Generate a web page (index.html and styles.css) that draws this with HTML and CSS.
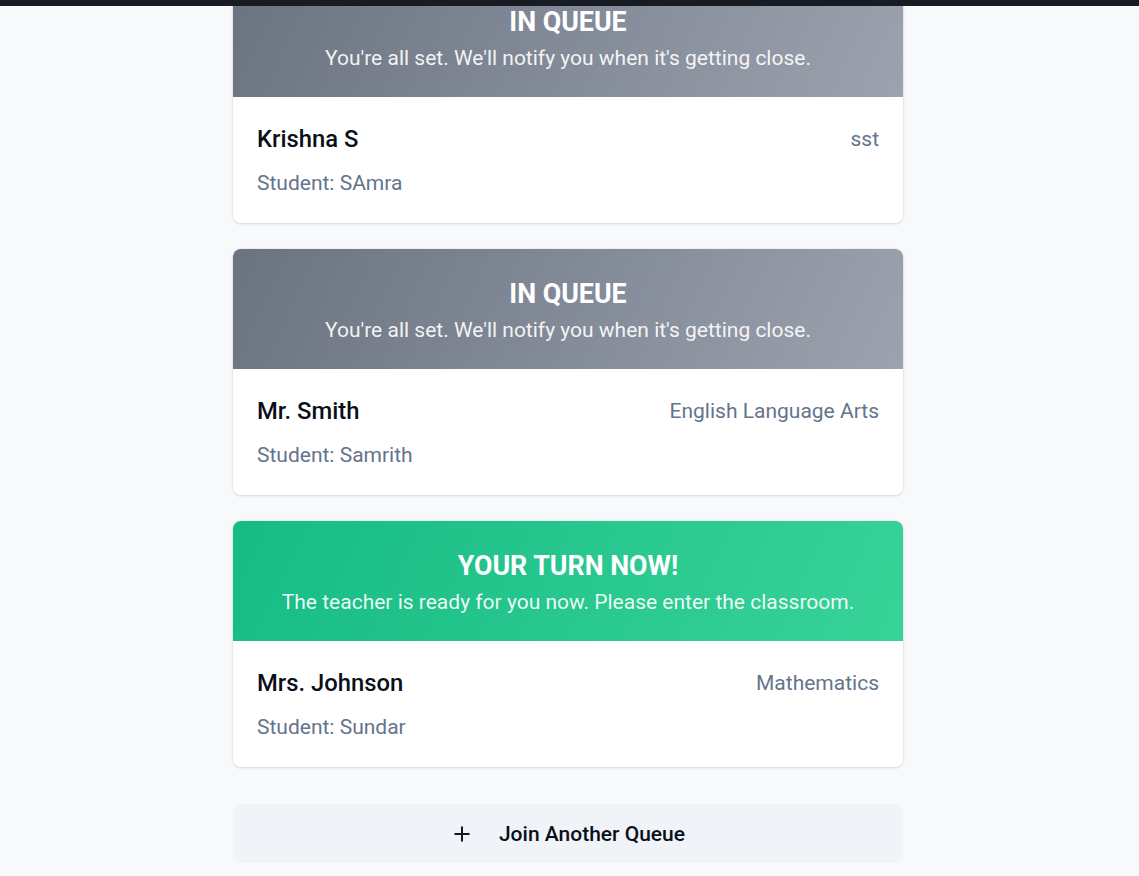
FILE: index.html
```html
<!DOCTYPE html>
<html lang="en">
<head>
<meta charset="utf-8">
<title>My Queues</title>
<link rel="stylesheet" href="styles.css">
</head>
<body>
<div class="topbar"></div>
<main class="page">
  <section class="list">
    <article class="card">
      <header class="status status-queue">
        <h2 class="status-title">IN QUEUE</h2>
        <p class="status-text">You're all set. We'll notify you when it's getting close.</p>
      </header>
      <div class="card-body">
        <div class="row">
          <span class="teacher">Krishna S</span>
          <span class="subject">sst</span>
        </div>
        <div class="student">Student: SAmra</div>
      </div>
    </article>
    <article class="card">
      <header class="status status-queue">
        <h2 class="status-title">IN QUEUE</h2>
        <p class="status-text">You're all set. We'll notify you when it's getting close.</p>
      </header>
      <div class="card-body">
        <div class="row">
          <span class="teacher">Mr. Smith</span>
          <span class="subject">English Language Arts</span>
        </div>
        <div class="student">Student: Samrith</div>
      </div>
    </article>
    <article class="card">
      <header class="status status-turn">
        <h2 class="status-title">YOUR TURN NOW!</h2>
        <p class="status-text">The teacher is ready for you now. Please enter the classroom.</p>
      </header>
      <div class="card-body">
        <div class="row">
          <span class="teacher">Mrs. Johnson</span>
          <span class="subject">Mathematics</span>
        </div>
        <div class="student">Student: Sundar</div>
      </div>
    </article>
  </section>
  <button class="join-btn" type="button">
    <svg class="plus" width="16" height="16" viewBox="0 0 16 16" aria-hidden="true">
      <path d="M8 0.5V15.5M0.5 8H15.5" stroke="#111827" stroke-width="2" fill="none"/>
    </svg>
    <span>Join Another Queue</span>
  </button>
</main>
</body>
</html>
```
FILE: styles.css
```css
* { box-sizing: border-box; }
html, body { margin: 0; padding: 0; }
body {
  background: #f8f9fb;
  font-family: Roboto, "Noto Sans", Arial, sans-serif;
  overflow: hidden;
  height: 876px;
  padding-right: 3px;
}
.topbar {
  position: fixed;
  top: 0; left: 0; right: 0;
  height: 6px;
  background: #181b24;
  z-index: 10;
}
.page {
  width: 670px;
  margin: -23px auto 0;
  display: flex;
  flex-direction: column;
}
.list {
  display: flex;
  flex-direction: column;
  gap: 26px;
}
.card {
  background: #fff;
  border-radius: 8px;
  overflow: hidden;
  box-shadow: 0 1px 3px rgba(15, 23, 42, 0.12), 0 0 0 1px rgba(15, 23, 42, 0.03);
}
.status {
  height: 120px;
  display: flex;
  flex-direction: column;
  align-items: center;
  justify-content: center;
  color: #fff;
  text-align: center;
  padding-top: 5px;
}
.status-queue { background: linear-gradient(115deg, #6b7280 0%, #9ca3af 100%); }
.status-turn { background: linear-gradient(115deg, #16bb84 0%, #38d399 100%); }
.status-title {
  margin: 0;
  font-size: 26.8px;
  font-weight: 700;
  line-height: 30px;
}
.status-text {
  margin: 7px 0 0;
  font-size: 21px;
  line-height: 28px;
  color: rgba(255, 255, 255, 0.92);
}
.card-body {
  height: 126px;
  padding: 27px 24px 0;
}
.row {
  display: flex;
  justify-content: space-between;
  align-items: center;
  height: 30px;
}
.teacher {
  font-size: 23.8px;
  font-weight: 500;
  color: #0b0f19;
}
.subject {
  font-size: 21px;
  color: #64748b;
}
.student {
  margin-top: 17px;
  font-size: 21px;
  color: #64748b;
}
.join-btn {
  margin-top: 37px;
  height: 59px;
  border: none;
  border-radius: 8px;
  background: #f0f3f8;
  display: flex;
  align-items: center;
  justify-content: center;
  gap: 29px;
  font-family: inherit;
  font-size: 21px;
  font-weight: 500;
  color: #0b0f19;
  padding: 0 0 0 3px;
}
.plus { display: block; }
```
